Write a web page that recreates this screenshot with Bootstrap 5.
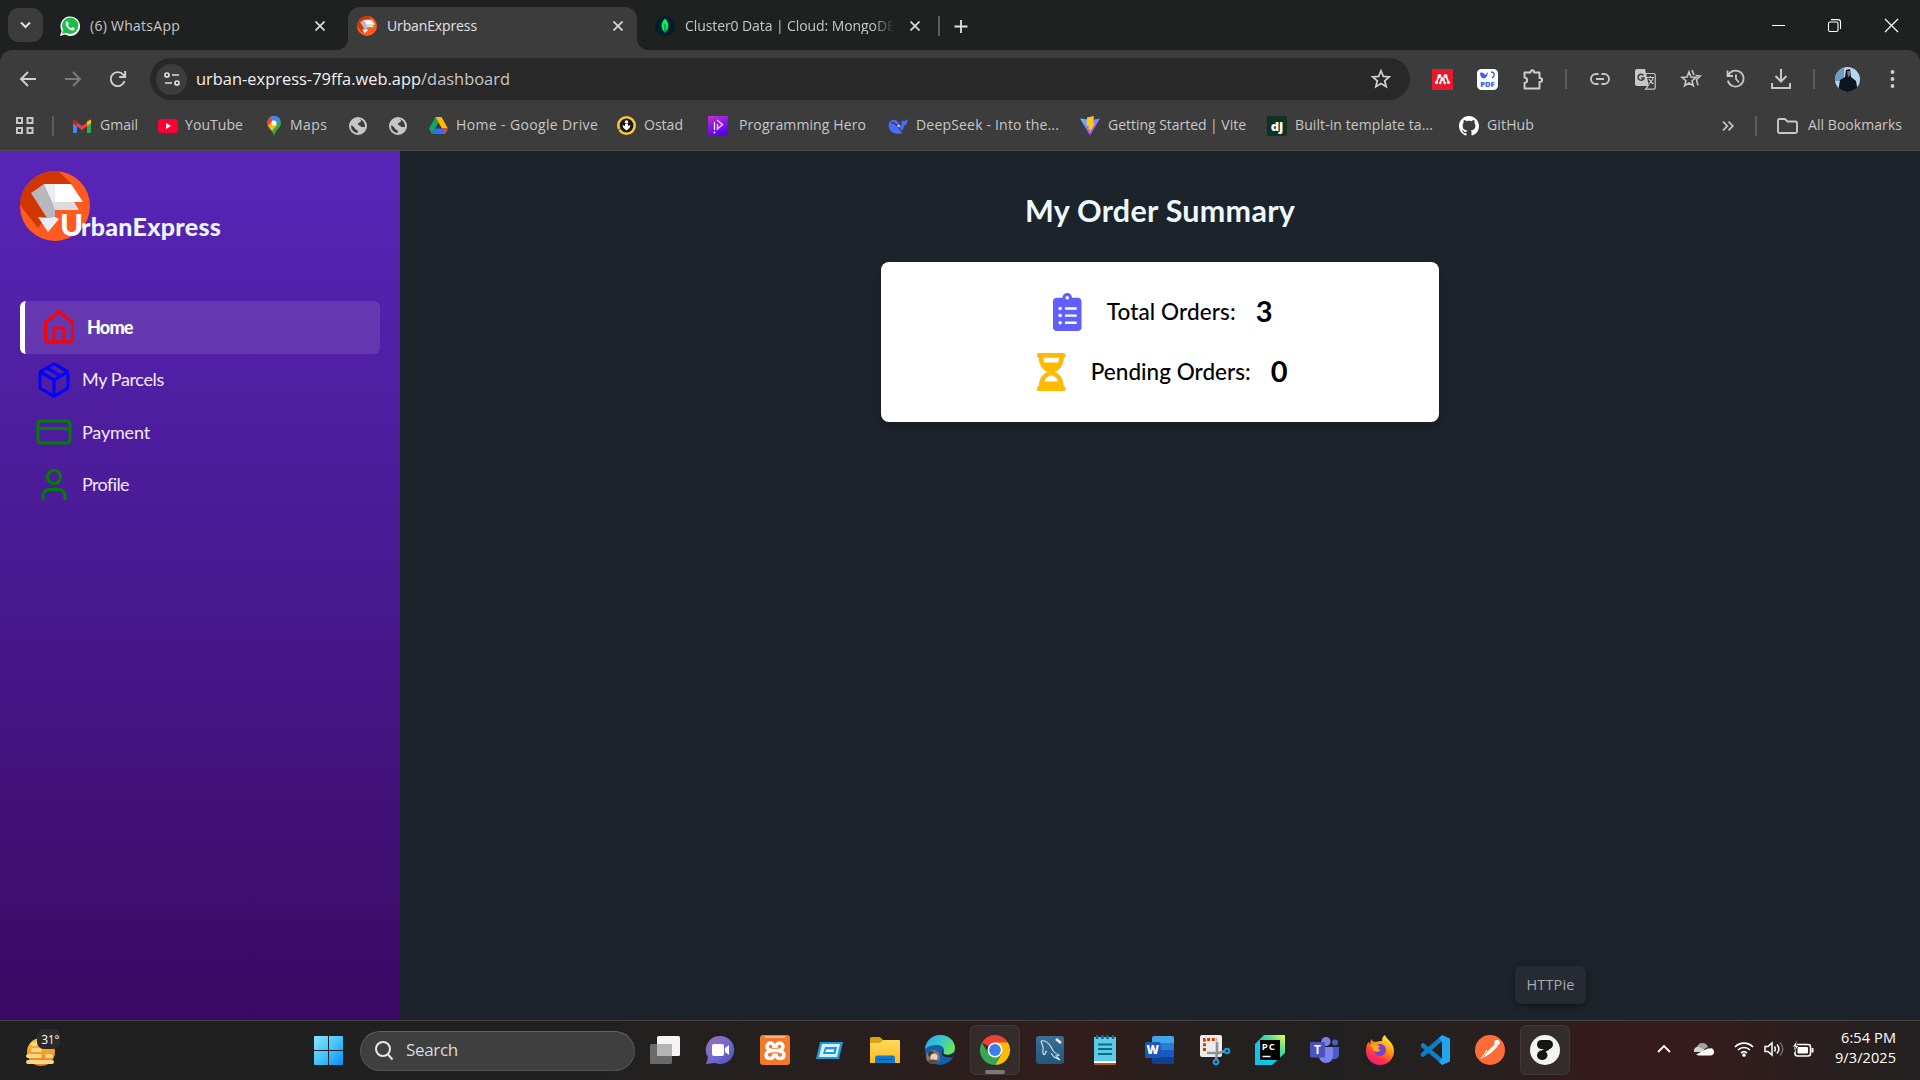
<!DOCTYPE html>
<html lang="en" data-bs-theme="dark">
<head>
<meta charset="utf-8">
<title>UrbanExpress</title>
<link href="https://cdn.jsdelivr.net/npm/bootstrap@5.3.0/dist/css/bootstrap.min.css" rel="stylesheet">
<script src="https://cdn.jsdelivr.net/npm/bootstrap@5.3.0/dist/js/bootstrap.bundle.min.js"></script>
<style>
html,body{height:1080px;overflow:hidden}
body{font-family:"Open Sans","Noto Sans",sans-serif;font-size:14px;line-height:1.2;background:#1d232a;color:#c7c7c7}
svg{display:block;flex:none;overflow:visible}
.fit{white-space:nowrap;flex:none;display:block}
.lbl-gap{margin-left:10px}
/* browser tabs */
.tabstrip{height:50px;background:#1f2120;padding-left:8px}
.tab-search{width:35px;height:34px;border-radius:11px;background:#3c3c3c}
.tab-item{height:43px;padding-bottom:5px}
.tab-one{width:305px;padding-right:23px;padding-left:17px}
.tab-two{width:289px;background:#3c3c3c;border-radius:12px 12px 0 0;padding-right:14px;padding-left:9px;color:#e3e3e3}
.tab-two::before,.tab-two::after{content:"";position:absolute;bottom:0;width:12px;height:12px}
.tab-two::before{left:-12px;background:radial-gradient(circle at 0 0,transparent 12px,#3c3c3c 12.5px)}
.tab-two::after{right:-12px;background:radial-gradient(circle at 100% 0,transparent 12px,#3c3c3c 12.5px)}
.tab-three{width:285px;padding-right:2px;padding-left:18px}
.fade-text{width:212px;-webkit-mask-image:linear-gradient(90deg,#000 188px,transparent 209px)}
.rule{width:2px;height:20px;background:#5b5c5e;flex:none}
.win-btns{gap:43px;padding-right:22px}
/* toolbar */
.toolbar-row{height:55px;background:#3c3c3c;border-radius:12px 12px 0 0;padding:8px 0 5px 16px}
.toolbar-wrap{background:#1f2120}
.nav-icons{width:134px;gap:21px}
.address{width:1260px;height:42px;border-radius:21px;background:#282828;padding:0 19px 0 6px}
.site-chip{width:31px;height:31px;border-radius:50%;background:#3c3c3c}
.url-text{font-size:16.4px;color:#c7c7c7;margin-left:9px}
.url-text b{font-weight:400;color:#f1f1f1}
.ext-icons{padding-left:10px}
.ext-icons>span{width:45px;display:flex;justify-content:center;flex:none}
.ext-icons>span.thin{width:22px}
.ext-icons>span.wide{width:46px}
/* bookmarks */
.bookmarks{height:46px;background:#3c3c3c;padding:0 18px 4px 15px;border-bottom:1px solid #4a4b4c}
.bm{height:20px}
.bm svg{margin-right:8px}
.w-apps{width:37px}.w-sep{width:20px}.w-gmail{width:86px}.w-yt{width:108px}.w-maps{width:83px}.w-globe{width:40px}
.w-drive{width:188px}.w-ostad{width:91px}.w-ph{width:180px}.w-deep{width:192px}.w-vite{width:187px}.w-dj{width:192px}
.w-yt svg{margin-right:7px}.w-ph svg{margin-right:11px}
.bm-end .rule{margin:0 16px 0 21px}
/* application */
.app-area{height:869px}
.sidebar{width:400px;padding:20px;background:linear-gradient(#5825b7,#4a1a94 45%,#3a0963)}
.app-area,.app-area *{font-family:Lato,"Open Sans",sans-serif}
.brand{height:70px;margin-bottom:60px;color:#eaf6ff;font-weight:900;font-size:25px;line-height:30px}
.brand-mark{width:70px;height:70px}
.brand-text{margin-left:-30px;margin-top:38px}
.brand-text .cap-u{font-size:31px;color:#fff;line-height:30px}
.menu-link{height:52.6px;padding-left:16px;color:#f2ebff;font-size:18px;border-radius:6px}
.menu-link.active{background:rgba(255,255,255,.11);border-left:5px solid #fff;color:#fff;font-weight:900}
.menu-link svg{margin-right:10px}
.main-pane{padding-top:39px}
.page-title{font-size:30.5px;font-weight:700;color:#ecf9ff;line-height:40px;margin:0 0 32px}
.summary{width:558px;height:160px;border-radius:8px;background:#fff;color:#000;box-shadow:0 6px 10px rgba(0,0,0,.15)}
.sum-row{height:60px;font-size:22.5px;font-weight:500;padding-left:5px}
.sum-row .fit{padding-bottom:2px}
.sum-row .num{font-size:29px;font-weight:700;margin-left:20px}
.sum-row svg{margin-right:25px}
.hover-tip{position:absolute;left:1515px;top:966px;width:71px;height:38px;border-radius:6px;background:#262a32;color:#a8abb0;font-size:14.5px;box-shadow:0 2px 7px rgba(0,0,0,.35)}
/* taskbar */
.taskbar{height:60px;border-top:1px solid #454443;background:linear-gradient(90deg,#202020 0,#212020 600px,#281f1e 900px,#331c1c 1080px,#26201e 1180px,#212020 1330px,#28201f 1500px,#351a1c 1590px,#371b1d 1690px,#2c1e1e 1790px,#222020 1920px)}
.weather{width:314px;padding-left:24px}
.search-pill{width:275px;height:40px;border-radius:20px;background:#3f3f3f;border:1px solid #535353;border-top-color:#636363;padding-left:14px;margin-left:17px;color:#dadada;font-size:17px}
.search-pill .fit{margin-left:13px}
.dock{gap:5px;padding-left:5px;padding-bottom:1px}
.dock-item{width:50px;height:50px;border-radius:6px}
.dock-item.on{background:#342c2b;border:1px solid #403937}
.dock-item.on.run::after{content:"";position:absolute;bottom:0;width:20px;height:4px;border-radius:2px;background:#7d7877}
.tray{padding-right:24px}
.clock{color:#fff;font-size:14.5px;line-height:20px;margin-left:21px;padding-bottom:2px}
</style>
</head>
<body>
<svg width="0" height="0" class="position-absolute">
<defs>
<linearGradient id="gWin" x1="0" y1="0" x2="1" y2="1"><stop offset="0" stop-color="#8be3ff"/><stop offset=".5" stop-color="#44c5fd"/><stop offset="1" stop-color="#0a8df5"/></linearGradient>
<linearGradient id="gPH" x1="0" y1="0" x2=".4" y2="1"><stop offset="0" stop-color="#c530d0"/><stop offset="1" stop-color="#5a00f0"/></linearGradient>
<linearGradient id="gVite" x1="0" y1="0" x2=".6" y2="1"><stop offset="0" stop-color="#41d1ff"/><stop offset="1" stop-color="#bd34fe"/></linearGradient>
<linearGradient id="gFold" x1="0" y1="0" x2="0" y2="1"><stop offset="0" stop-color="#ffd95e"/><stop offset="1" stop-color="#fbbc1d"/></linearGradient>
<linearGradient id="gChat" x1="0" y1="0" x2="1" y2="1"><stop offset="0" stop-color="#a46fa8"/><stop offset=".5" stop-color="#7468d0"/><stop offset="1" stop-color="#4a52b8"/></linearGradient>
<linearGradient id="gEdge" x1="0" y1="0" x2="1" y2=".5"><stop offset="0" stop-color="#2aa7e8"/><stop offset=".55" stop-color="#35c8cf"/><stop offset="1" stop-color="#6be35c"/></linearGradient>
<linearGradient id="gPC" x1="0" y1="1" x2="1" y2="0"><stop offset="0" stop-color="#07c3f2"/><stop offset=".5" stop-color="#12cbd8"/><stop offset=".72" stop-color="#5fe08a"/><stop offset="1" stop-color="#fcf84a"/></linearGradient>
<linearGradient id="gFF" x1=".8" y1="0" x2=".2" y2="1"><stop offset="0" stop-color="#fff44f"/><stop offset=".4" stop-color="#ff980e"/><stop offset=".7" stop-color="#ff3647"/><stop offset="1" stop-color="#e31587"/></linearGradient>
<linearGradient id="gSun" x1="0" y1="0" x2="0" y2="1"><stop offset="0" stop-color="#fcc330"/><stop offset="1" stop-color="#f07a1a"/></linearGradient>
<linearGradient id="gSql" x1="0" y1="0" x2="0" y2="1"><stop offset="0" stop-color="#3a7097"/><stop offset="1" stop-color="#20577a"/></linearGradient>
<clipPath id="cRound"><circle cx="35" cy="35" r="35"/></clipPath>
<clipPath id="cAv"><circle cx="12.5" cy="12.5" r="12.5"/></clipPath>
<symbol id="logo" viewBox="0 0 70 70"><g clip-path="url(#cRound)"><path fill="#ff5a1f" d="M0 0h70v70H0z"/><path fill="#d13500" d="M0 0h38l14 13-24 30-10 14L0 34z"/></g><path fill="#b8b8bc" d="M11 22 24 13 35 29v18H27z"/><path fill="#e8ecf5" d="M24 13h11v18h-3z"/><path fill="#fff" d="M35 13h16l12 18H35z"/><path fill="#dcdce0" d="M32 31h22l5 8H35z"/><path fill="#e8ecf5" d="m18 46 10 1 7-1 4 2-11 13z"/></symbol>
<symbol id="globe" viewBox="0 0 18 18"><circle cx="9" cy="9" r="8" fill="#3c3c3c" stroke="#c7c7c7" stroke-width="2"/><path fill="#c7c7c7" d="M1 8C1 3 6 .5 10 1c0 2 2 1 2 3s-3 1-3 3 3 1 3 3h4c0 3-3 6-7 7-1-2 1-3-1-4-3-1-2-4-7-5z"/></symbol>
<symbol id="cross" viewBox="0 0 10 10"><path d="m.5.5 9 9m0-9-9 9" stroke="#dcdcdc" stroke-width="1.7"/></symbol>
</defs>
</svg>

<header>
 <div class="tabstrip d-flex align-items-end">
  <div class="tab-search d-flex align-items-center justify-content-center mb-2"><svg width="11" height="8"><path d="m1 1.5 4.5 4.5L10 1.5" fill="none" stroke="#e0e0e0" stroke-width="2"/></svg></div>
  <div class="tab-item tab-one d-flex align-items-center">
   <svg width="20" height="20" viewBox="0 0 20 20"><path fill="#fff" d="M0 20 1.6 14.8A9.8 9.8 0 1 1 5.2 18.6z"/><circle cx="10.2" cy="9.8" r="8.2" fill="#1bbd4a"/><path fill="#1bbd4a" d="m2 18 1.3-4.6 3.3 3.4z"/><path fill="#fff" d="M7.2 5.2c-2.4.5-2 4.2 1.2 7.2 3.1 2.8 6.2 2.5 6.3.3 0-.8-1.9-1.7-2.3-1.6-.5.1-.9 1.3-1.4 1.1C9.6 11.700 8.400 10.500 8 9.300c-.1-.5.9-.9.8-1.400C8.700 7.200 7.900 5.200 7.200 5.200z"/></svg>
   <span class="fit lbl-gap me-auto" data-w="90">(6) WhatsApp</span><svg width="10" height="10"><use href="#cross"/></svg>
  </div>
  <div class="tab-item tab-two d-flex align-items-center position-relative">
   <svg width="20" height="20"><use href="#logo"/></svg><span class="fit lbl-gap me-auto" data-w="90">UrbanExpress</span><svg width="10" height="10"><use href="#cross"/></svg>
  </div>
  <div class="tab-item tab-three d-flex align-items-center">
   <svg width="20" height="20"><circle cx="10" cy="10" r="10" fill="#001e2b"/><path fill="#00ed64" d="M10 2.500c4.500 4.500 4.500 10-.2 14-4.300-4-4.300-9.500.2-14z"/><path d="M10 8v9.500" stroke="#00684a"/></svg>
   <span class="fade-text lbl-gap me-auto"><span class="fit" data-w="211">Cluster0 Data | Cloud: MongoDB</span></span><svg width="10" height="10"><use href="#cross"/></svg>
  </div>
  <div class="tab-item d-flex align-items-center ps-3"><span class="rule"></span><svg width="13" height="13" class="ms-3"><path d="M5 0v13M-1.500 6.500h13" stroke="#e3e3e3" stroke-width="1.800"/></svg></div>
  <div class="win-btns tab-item d-flex align-items-center ms-auto">
   <svg width="13" height="13"><path d="M-1 5.500h13" stroke="#fff"/></svg>
   <svg width="13" height="13" viewBox="1 1 13 13"><rect x=".5" y="3" width="9.500" height="9.500" rx="1.500" fill="none" stroke="#fff" stroke-width="1.100"/><path d="M3 .6h7a2.500 2.500 0 0 1 2.500 2.500v7" fill="none" stroke="#fff" stroke-width="1.100"/></svg>
   <svg width="13" height="13"><path d="m0-1 13 13M13-1 0 12" stroke="#fff" stroke-width="1.200"/></svg>
  </div>
 </div>
 <div class="toolbar-wrap"><div class="toolbar-row d-flex align-items-center">
  <div class="nav-icons d-flex align-items-center">
   <svg width="24" height="24" viewBox="0 0 24 24" fill="none" stroke="#d0d0d0" stroke-width="1.900"><path d="M20 12H5m7-7-7 7 7 7"/></svg>
   <svg width="24" height="24" viewBox="0 0 24 24" fill="none" stroke="#7b7b7b" stroke-width="1.900"><path d="M4 12h15m-7-7 7 7-7 7"/></svg>
   <svg width="24" height="24" viewBox="0 0 24 24" fill="none" stroke="#d0d0d0" stroke-width="1.900"><path d="M18.500 14a7 7 0 1 1-1.300-6.300l1.800 2M19.200 4v6h-6"/></svg>
  </div>
  <div class="address d-flex align-items-center">
   <span class="site-chip d-flex align-items-center justify-content-center"><svg width="16" height="14" fill="none" stroke="#dedede" stroke-width="1.700"><circle cx="3" cy="3" r="2"/><path d="M8 3h7M1 11h7"/><circle cx="13" cy="11" r="2"/></svg></span>
   <span class="fit url-text me-auto" data-w="314"><b>urban-express-79ffa.web.app</b>/dashboard</span>
   <svg width="20" height="20" viewBox="0 0 20 20"><path d="m10 1.800 2.300 5.600 6 .5-4.600 3.900 1.500 5.900-5.200-3.200-5.200 3.200 1.500-5.900L1.700 7.900l6-.5z" fill="none" stroke="#d0d0d0" stroke-width="1.700"/></svg>
  </div>
  <div class="ext-icons d-flex align-items-center flex-grow-1">
   <span><svg width="21" height="21"><path fill="#e8192c" d="M0 0h21v21H0z"/><g fill="#fff"><circle cx="7.500" cy="7" r="2"/><circle cx="13.500" cy="7" r="2"/><circle cx="10.500" cy="10" r="2"/><circle cx="4.500" cy="13.500" r="1.600"/><circle cx="16.500" cy="13.500" r="1.600"/><circle cx="8.200" cy="14" r="1.200"/><circle cx="12.800" cy="14" r="1.200"/></g><path d="M4.500 13.500 6.500 8M16.500 13.500 14.500 8M8.200 14l1.500-4M12.800 14l-1.500-4" fill="none" stroke="#fff" stroke-width="1.700"/></svg></span>
   <span><svg width="21" height="21"><rect width="21" height="21" rx="4.500" fill="#fff"/><path fill="#4060f5" d="M3 4c2-1 4 0 5 2l3-3-1 4c-2 4-7 3-7-3z"/><path d="M14 3c4 0 4 4 1 6" fill="none" stroke="#4060f5" stroke-width="1.400"/><text x="10.500" y="18" text-anchor="middle" font-size="7.500" font-weight="800" fill="#4060f5">PDF</text></svg></span>
   <span><svg width="21" height="21" fill="none" stroke="#d0d0d0" stroke-width="1.900"><path d="M2.500 3.500h6C8.500.5 12 .5 12 3.500h5.500V9c3.500 0 3.500 4 0 4v6.500h-15V14c3.500-.5 3.500-5 0-5.500z" stroke-linejoin="round"/></svg></span>
   <span class="thin"><i class="rule"></i></span>
   <span class="wide"><svg width="20" height="12" fill="none" stroke="#c7c7c7" stroke-width="1.900"><path d="M8.500 1H6a5 5 0 0 0 0 10h2.500M11.500 1H14a5 5 0 0 1 0 10h-2.500M6 6h8"/></svg></span>
   <span><svg width="21" height="21"><path fill="#c7c7c7" d="M2 0h8l4 17H2a2 2 0 0 1-2-2V2a2 2 0 0 1 2-2z"/><path d="M11 4.500h7.500a1.700 1.700 0 0 1 1.700 1.700v12.300a1.700 1.700 0 0 1-1.700 1.700h-8l2.500-3M12 8.500h7M15.500 7v2m2.500 0c-.5 3-2.500 4.500-4 6m0-5c1 2 3 4 4.500 5" fill="none" stroke="#c7c7c7" stroke-width="1.200"/><path d="M8.500 6.500A3 3 0 1 0 9 9H6.200" fill="none" stroke="#3c3c3c" stroke-width="1.500"/></svg></span>
   <span><svg width="21" height="20" fill="none" stroke="#c7c7c7" stroke-width="1.600"><path d="m9 3 2 5 5 .4-3.900 3.300 1.200 5L9 14l-4.300 2.700 1.200-5L2 8.400 7 8z"/><path d="m12 1 2 5M15.500 6.500l4.700.5-3.700 3.400 1.400 6"/></svg></span>
   <span><svg width="20" height="20" fill="none" stroke="#c7c7c7" stroke-width="1.800"><path d="M1.500 1.500V7H7M2 7a8 8 0 1 1-.2 4.500M10 5.500V10l3 3.500"/></svg></span>
   <span><svg width="20" height="20" fill="none" stroke="#c7c7c7" stroke-width="2"><path d="M10 0v12m-5.500-5 5.500 5.500L15.500 7M1 14v5h18v-5"/></svg></span>
   <span class="thin"><i class="rule"></i></span>
   <span><svg width="25" height="25"><g clip-path="url(#cAv)"><path fill="#b5d6ea" d="M0 0h25v25H0z"/><path fill="#6f9cc0" d="M0 0h9v14H0z"/><path fill="#0e1420" d="M3 25 5 13l5-3 1-7 4-1 1 8 5 4 2 11z"/><path fill="#8c6b5c" d="M12 4h3v5l-2 1z"/></g></svg></span>
   <span><svg width="5" height="20" fill="#d0d0d0"><circle cx="2.500" cy="3" r="1.900"/><circle cx="2.500" cy="10" r="1.900"/><circle cx="2.500" cy="17" r="1.900"/></svg></span>
  </div>
 </div></div>
 <nav class="bookmarks d-flex align-items-center">
  <div class="bm w-apps d-flex align-items-center"><svg width="19" height="19" fill="none" stroke="#c7c7c7" stroke-width="2"><path d="M2 2h5v5H2zM12.500 2h5v5h-5zM2 12h5v5H2zM12.500 12h5v5h-5z"/></svg></div>
  <div class="w-sep"><span class="rule d-block"></span></div>
  <div class="bm w-gmail d-flex align-items-center"><svg width="20" height="16"><path fill="#4285f4" d="M1 3v12h4V6z"/><path fill="#34a853" d="M15 6v9h4V3z"/><path fill="#ea4335" d="M1 1.500 10 8l9-6.500v4L10 12 1 5.500z"/><path fill="#c5221f" d="M1 1.500 5 3.500V8L1 5.500z"/><path fill="#fbbc04" d="m15 3.500 4-2v4L15 8z"/></svg><span class="fit" data-w="38">Gmail</span></div>
  <div class="bm w-yt d-flex align-items-center"><svg width="20" height="14"><rect width="20" height="14" rx="3.500" fill="#ff0033"/><path fill="#fff" d="m8 4 5 3-5 3z"/></svg><span class="fit" data-w="58">YouTube</span></div>
  <div class="bm w-maps d-flex align-items-center"><svg width="16" height="20" viewBox="0 0 14 20"><path fill="#34a853" d="M0 7a7 7 0 0 1 14 0c0 5-6 7-7 13C6 14 0 12 0 7z"/><path fill="#4285f4" d="M3 1a7 7 0 0 1 10.500 3L7 11z"/><path fill="#ea4335" d="M3 1 6 6 2 11A7 7 0 0 1 3 1z"/><path fill="#fbbc04" d="m1 10 5-6 4 5-5 6z"/><circle cx="7" cy="7" r="2.500" fill="#fff"/></svg><span class="fit" data-w="37">Maps</span></div>
  <div class="bm w-globe d-flex align-items-center"><svg width="18" height="18"><use href="#globe"/></svg></div>
  <div class="bm w-globe d-flex align-items-center"><svg width="18" height="18"><use href="#globe"/></svg></div>
  <div class="bm w-drive d-flex align-items-center"><svg width="19" height="17"><path fill="#0da960" d="M6.500 0 0 11.500 3 17 9.500 5.500z"/><path fill="#fbbc04" d="M6.500 0h6L19 11.500h-6z"/><path fill="#2d6ff7" d="M6 11.500h13L16 17H3z"/><path fill="#ea4335" d="m13 11.500 6 0-3 5.500z"/></svg><span class="fit" data-w="142">Home - Google Drive</span></div>
  <div class="bm w-ostad d-flex align-items-center"><svg width="19" height="19"><circle cx="9.500" cy="9.500" r="8.200" fill="#161616" stroke="#ffc92e" stroke-width="2.600"/><circle cx="9.500" cy="6" r="1.800" fill="#fff"/><path fill="#fff" d="m5.500 9 2.500 1V8h3v2l2.500-1-1 3-3 2.500-3-2.500z"/><path d="M1 14.500 5 11" stroke="#3c3c3c"/></svg><span class="fit" data-w="39">Ostad</span></div>
  <div class="bm w-ph d-flex align-items-center"><svg width="20" height="20"><path fill="url(#gPH)" d="M0 0h20v20H0z"/><path d="M6.500 6v8" stroke="#fff" stroke-width="1.300"/><circle cx="6.500" cy="16.500" r=".9" fill="#fff"/><path d="m9 4 5.500 4.500L9.500 13V8" fill="none" stroke="#f1b9ff" stroke-width="1.600"/></svg><span class="fit" data-w="127">Programming Hero</span></div>
  <div class="bm w-deep d-flex align-items-center"><svg width="20" height="16"><path fill="#4d6bfe" d="M1 5c2-4 7-4 9-1l3 4c1-1 0-3 1-6 1 2 4 1 5-1 1 4-1 6-3 7 0 3-2 5-3 6l2 1c-6 2-12 0-14-5-.5-2-.5-4 0-5z"/><path d="M3 5c3-1 5 1 7 4s3 4 5 5" fill="none" stroke="#3c3c3c" stroke-width="1.300"/><circle cx="10.500" cy="8" r="1" fill="#fff"/></svg><span class="fit" data-w="143">DeepSeek - Into the...</span></div>
  <div class="bm w-vite d-flex align-items-center"><svg width="20" height="20"><path fill="url(#gVite)" d="m0 2.500 10 17 10-17-8 1.400z"/><path fill="#ffc61c" d="m14 0-7 1.500-.5 8.500 2.500-.5-.8 4 2-.6-1 4.500 6-10.500-2.200.5z"/></svg><span class="fit" data-w="138">Getting Started | Vite</span></div>
  <div class="bm w-dj d-flex align-items-center"><svg width="20" height="20"><rect width="20" height="20" rx="1" fill="#0c3326"/><text x="10" y="14.500" text-anchor="middle" font-size="13" font-weight="800" fill="#fff">dj</text></svg><span class="fit" data-w="138">Built-in template ta...</span></div>
  <div class="bm d-flex align-items-center"><svg width="20" height="20" viewBox="0 0 16 16" fill="#fff"><path d="M8 0C3.580 0 0 3.580 0 8c0 3.540 2.290 6.530 5.470 7.590.4.07.55-.17.55-.38 0-.19-.01-.82-.01-1.490-2.010.37-2.530-.49-2.690-.94-.09-.23-.48-.94-.82-1.130-.28-.15-.68-.52-.01-.53.63-.01 1.080.58 1.230.82.72 1.210 1.870.87 2.330.66.07-.52.28-.87.51-1.070-1.780-.2-3.640-.89-3.640-3.950 0-.87.31-1.590.82-2.150-.08-.2-.36-1.020.08-2.120 0 0 .67-.21 2.200.82.64-.18 1.320-.27 2-.27s1.360.09 2 .27c1.530-1.040 2.200-.82 2.200-.82.44 1.100.16 1.920.08 2.120.51.56.82 1.270.82 2.150 0 3.070-1.870 3.750-3.650 3.950.29.25.54.73.54 1.480 0 1.070-.01 1.930-.01 2.200 0 .21.15.46.55.38A8.010 8.010 0 0 0 16 8c0-4.420-3.580-8-8-8"/></svg><span class="fit" data-w="47">GitHub</span></div>
  <div class="bm-end ms-auto d-flex align-items-center">
   <svg width="12" height="10" fill="none" stroke="#c7c7c7" stroke-width="1.700"><path d="m1 .7 4.300 4.300L1 9.300M6.500.7 10.800 5 6.500 9.300"/></svg>
   <span class="rule"></span><svg class="ms-1" width="21" height="16" fill="none" stroke="#c7c7c7" stroke-width="1.900"><path d="M1 2.500A1.500 1.500 0 0 1 2.500 1H8l2.500 2.500h8A1.500 1.500 0 0 1 20 5v8.500a1.500 1.500 0 0 1-1.500 1.500h-16A1.500 1.500 0 0 1 1 13.500z"/></svg>
   <span class="fit lbl-gap" data-w="94">All Bookmarks</span>
  </div>
 </nav>
</header>

<div class="app-area d-flex">
 <aside class="sidebar flex-shrink-0">
  <div class="brand d-flex">
   <svg class="brand-mark"><use href="#logo"/></svg>
   <div class="brand-text d-flex align-items-baseline position-relative"><span class="cap-u fit" data-w="21">U</span><span class="fit" data-w="140">rbanExpress</span></div>
  </div>
  <nav>
   <div class="menu-link active d-flex align-items-center"><svg width="36" height="36" viewBox="0 0 36 36" fill="none" stroke="#f00" stroke-width="3" stroke-linejoin="round" stroke-linecap="round"><path d="M18 2.500 4.500 13.500V30A3 3 0 0 0 7.500 33h21a3 3 0 0 0 3-3V13.500z"/><path d="M13 33V21.500a2.500 2.500 0 0 1 2.500-2.500h5a2.500 2.500 0 0 1 2.500 2.500V33"/></svg><span class="fit" data-w="46">Home</span></div>
   <div class="menu-link d-flex align-items-center"><svg width="36" height="36" viewBox="0 0 36 36" fill="none" stroke="#00f" stroke-width="3" stroke-linejoin="round" stroke-linecap="round"><path d="M16.500 2.500a3 3 0 0 1 3 0L30.500 9a3 3 0 0 1 1.500 2.600v12.800a3 3 0 0 1-1.500 2.600l-11 6.500a3 3 0 0 1-3 0L5.500 27A3 3 0 0 1 4 24.400V11.600A3 3 0 0 1 5.500 9z"/><path d="M4.500 10 18 18l13.500-8M18 18v15.500M11 6l13.500 8"/></svg><span class="fit" data-w="82">My Parcels</span></div>
   <div class="menu-link d-flex align-items-center"><svg width="36" height="36" viewBox="0 0 36 36" fill="none" stroke="#008000" stroke-width="3"><rect x="2" y="7" width="32" height="22" rx="3"/><path d="M2 14.500h32"/></svg><span class="fit" data-w="68">Payment</span></div>
   <div class="menu-link d-flex align-items-center"><svg width="36" height="36" viewBox="0 0 36 36" fill="none" stroke="#008000" stroke-width="3" stroke-linecap="round"><circle cx="18" cy="10" r="6.500"/><path d="M7 32v-3a6.500 6.500 0 0 1 6.500-6.500h9A6.500 6.500 0 0 1 29 29v3"/></svg><span class="fit" data-w="47">Profile</span></div>
  </nav>
 </aside>
 <main class="main-pane flex-grow-1 d-flex flex-column align-items-center">
  <h1 class="page-title"><span class="fit" data-w="270">My Order Summary</span></h1>
  <section class="summary d-flex flex-column justify-content-center">
   <div class="sum-row d-flex align-items-center justify-content-center"><svg width="28.500" height="38" viewBox="0 0 384 512" fill="#5f5fff"><path d="M336 64h-80c0-35.300-28.700-64-64-64s-64 28.700-64 64H48C21.500 64 0 85.500 0 112v352c0 26.500 21.500 48 48 48h288c26.500 0 48-21.500 48-48V112c0-26.500-21.500-48-48-48z"/><g fill="#fff"><circle cx="192" cy="64" r="24"/><circle cx="96" cy="208" r="24"/><circle cx="96" cy="304" r="24"/><circle cx="96" cy="400" r="24"/><rect x="160" y="192" width="160" height="32" rx="8"/><rect x="160" y="288" width="160" height="32" rx="8"/><rect x="160" y="384" width="160" height="32" rx="8"/></g></svg><span class="fit" data-w="129">Total Orders:</span><span class="fit num" data-w="16">3</span></div>
   <div class="sum-row d-flex align-items-center justify-content-center"><svg width="28.500" height="38" viewBox="0 0 384 512" fill="#ffb900"><path fill-rule="evenodd" d="M360 0H24C10.700 0 0 10.700 0 24v16c0 13.300 10.700 24 24 24 0 91 51 167.700 120.800 192C75 280.300 24 357 24 448c-13.300 0-24 10.700-24 24v16c0 13.300 10.700 24 24 24h336c13.300 0 24-10.700 24-24v-16c0-13.300-10.700-24-24-24 0-91-51-167.700-120.800-192C309 231.700 360 155 360 64c13.300 0 24-10.700 24-24V24c0-13.300-10.700-24-24-24zm-75 384H99c17-46.800 52-80 93-80s76 33.200 93 80zm0-256H99c-7-19.500-11-41.300-11-64h208c0 22.800-4 44.600-11 64z"/></svg><span class="fit" data-w="160">Pending Orders:</span><span class="fit num" data-w="17">0</span></div>
  </section>
 </main>
</div>
<div class="hover-tip d-flex align-items-center justify-content-center"><span class="fit" data-w="48">HTTPie</span></div>

<footer class="taskbar d-flex align-items-center">
 <div class="weather"><svg width="38" height="38"><circle cx="17" cy="20" r="14" fill="url(#gSun)"/><path d="M9 12h4M9 18h7M4 24h12M23 24h4M4 30h24" stroke="#f3d98c" stroke-width="4" stroke-linecap="round"/><rect x="13" y="-3" width="23" height="20" rx="7" fill="#2b2b2b"/><text x="17.500" y="11.500" font-size="13.500" textLength="18" lengthAdjust="spacingAndGlyphs" fill="#fff">31°</text></svg></div>
 <svg width="29" height="29"><path fill="url(#gWin)" d="M1 0h13v14H0V1a1 1 0 0 1 1-1zM15 0h13a1 1 0 0 1 1 1v13H15zM0 15h14v14H1a1 1 0 0 1-1-1zM15 15h14v13a1 1 0 0 1-1 1H15z"/></svg>
 <div class="search-pill d-flex align-items-center"><svg width="18" height="19" fill="none" stroke="#e6e6e6" stroke-width="2"><circle cx="8" cy="8" r="7"/><path d="m12.500 13 5 5.500"/></svg><span class="fit" data-w="52">Search</span></div>
 <div class="dock d-flex align-items-center">
  <div class="dock-item d-flex align-items-center justify-content-center"><svg width="30" height="30"><rect x="7" y="1" width="23" height="20" rx="1.500" fill="#f4f4f4"/><rect x="0" y="9" width="22" height="20" rx="1.500" fill="#6a6a6a"/><path fill="#b4b4b4" d="M7 9h15v12H7z"/></svg></div>
  <div class="dock-item d-flex align-items-center justify-content-center"><svg width="30" height="30"><path fill="url(#gChat)" d="M15 1a14 14 0 1 1-5 27L1 29l2-6.500A14 14 0 0 1 15 1z"/><rect x="7" y="9" width="12" height="12" rx="2" fill="#fff"/><path fill="#fff" d="m20 13 4-3v10l-4-3z"/></svg></div>
  <div class="dock-item d-flex align-items-center justify-content-center"><svg width="30" height="30"><rect width="30" height="30" rx="3" fill="#f4782a"/><path fill="#fbb383" d="M4 1h22l-1 2H5z"/><path d="M12 15.500h6M12 15.500c-3-.5-5-1.500-5-4S9 8 10.500 8s3.500 1 3.500 5M18 15.500c3-.5 5-1.500 5-4S21 8 19.500 8 16 9 16 13M12 15.500c-3 .5-6 2-6 4.500S8 23.500 10 23.500s4-1 4-5M18 15.500c3 .5 6 2 6 4.500s-2 3.500-4 3.500-4-1-4-5" fill="none" stroke="#fff" stroke-width="3.400" stroke-linejoin="round"/></svg></div>
  <div class="dock-item d-flex align-items-center justify-content-center"><svg width="30" height="30"><path fill="#1d98d9" d="m5 7 23 0-4 17H1z"/><path fill="#d3f1fc" d="m7 9 18 0-3 13H4z"/><path fill="#1d98d9" d="m10 12h12l-1.500 7H8z"/><path fill="#fff" d="M11 14.500h8l-.5 2.500h-8z"/></svg></div>
  <div class="dock-item d-flex align-items-center justify-content-center"><svg width="30" height="30"><path fill="#dca10c" d="M0 3.500A1.500 1.500 0 0 1 1.500 2H10l4 4v6H0z"/><path fill="url(#gFold)" d="M0 8h10l3-3h16a1 1 0 0 1 1 1v22H0z"/><path fill="#1177cf" d="M5 28v-5a2.500 2.500 0 0 1 2.500-2.500h15A2.500 2.500 0 0 1 25 23v5z"/><path d="M8 24.500h14" stroke="#0b5292"/></svg></div>
  <div class="dock-item d-flex align-items-center justify-content-center"><svg width="30" height="30"><circle cx="15" cy="15" r="15" fill="#1060ad"/><path fill="url(#gEdge)" d="M0 14C1 5 8 0 15 0c9 0 15 6 15 13 0 6-7 8-11 6-2-1 0-2 0-4 0-3-3-5-7-5-6 0-10 2-12 4z"/><path fill="#232020" d="M19 15c-1 2-1 3 0 4 3 2 8 1 11-2l-2 5c-4 1-10 0-11-3-.5-2 1-4 2-4z"/><circle cx="8" cy="22" r="7" fill="#8a7466"/><circle cx="6" cy="19" r="3" fill="#443a36"/><circle cx="9" cy="22" r="3.600" fill="#e2d3c6"/><path fill="#5a4a42" d="M3 26c3-2 7-2 10 0-2 4-8 4-10 0z"/></svg></div>
  <div class="dock-item on run d-flex align-items-center justify-content-center position-relative"><svg width="30" height="30" viewBox="0 0 30 30"><path fill="#ea4335" d="M15 15 2 7.500a15 15 0 0 1 26 0z"/><path fill="#fbbc04" d="M15 7.500h13A15 15 0 0 1 15 30l6.500-11z"/><path fill="#34a853" d="M2 7.500A15 15 0 0 0 15 30l6.500-11.300L8.500 18.700z"/><circle cx="15" cy="15" r="7.500" fill="#fff"/><circle cx="15" cy="15" r="5.900" fill="#3b7ded"/></svg></div>
  <div class="dock-item d-flex align-items-center justify-content-center"><svg width="28" height="28"><rect width="28" height="28" rx="3" fill="url(#gSql)"/><path d="M5 5c4-1 8 2 10 6s3 6 8 8l-3 1 4 4-6-3-3-4M5 5c1 4 3 6 2 9s1 6 2 4 0-4 2-2" fill="none" stroke="#d5e5ef" stroke-width="1.100"/><path d="m20 3 5 4" stroke="#e8eef2" stroke-width="2.400"/></svg></div>
  <div class="dock-item d-flex align-items-center justify-content-center"><svg width="22" height="30"><rect y="3" width="22" height="27" rx="1.500" fill="#a85d1b"/><path fill="#fff" d="M0 5h22v23H0z"/><path fill="#5ccbe4" d="M0 2h22v24H0z"/><path d="M4 9.500h14M4 14h14M4 19h14" stroke="#0a6b8e" stroke-width="2"/><path d="M3 0v4M8.500 0v4M13.500 0v4M19 0v4" stroke="#0a6b8e" stroke-width="2.500"/></svg></div>
  <div class="dock-item d-flex align-items-center justify-content-center"><svg width="30" height="30"><path fill="#41a5ee" d="M7 3a2 2 0 0 1 2-2h18.500A1.500 1.500 0 0 1 29 2.500V8H7z"/><path fill="#2b7cd3" d="M7 8h22v7H7z"/><path fill="#185abd" d="M7 15h22v7H7z"/><path fill="#103f91" d="M7 22h22v5.500a1.500 1.500 0 0 1-1.500 1.500H9a2 2 0 0 1-2-2z"/><rect y="7" width="15.500" height="16" rx="1.500" fill="#1a57b8"/><text x="7.700" y="19" text-anchor="middle" font-size="12" font-weight="800" fill="#fff">W</text></svg></div>
  <div class="dock-item d-flex align-items-center justify-content-center"><svg width="30" height="30"><rect width="22" height="22" rx="2" fill="#ececec"/><path d="M4.500 16V4.500H17" fill="none" stroke="#d83b01" stroke-width="3" stroke-dasharray="3 1.700"/><path d="M7 18h12l6-2M17 7v11l-1 7" fill="none" stroke="#8d9297" stroke-width="2.600"/><g fill="none" stroke="#1a9be6" stroke-width="2"><circle cx="27" cy="16" r="2.300"/><circle cx="16" cy="27" r="2.300"/></g></svg></div>
  <div class="dock-item d-flex align-items-center justify-content-center"><svg width="30" height="30"><path fill="url(#gPC)" d="M9 0h21v18L17 30H0V9z"/><path d="M5 5h20v20H5z"/><text x="6.800" y="15" font-size="9.500" font-weight="700" fill="#fff" textLength="13">PC</text><path d="M7.500 21.500h8" stroke="#fff" stroke-width="1.500"/></svg></div>
  <div class="dock-item d-flex align-items-center justify-content-center"><svg width="30" height="30"><circle cx="25" cy="7.500" r="3" fill="#5059c9"/><circle cx="16" cy="6.500" r="4.500" fill="#7b83eb"/><path fill="#5059c9" d="M20 12h9v8a5 5 0 0 1-9 2z"/><path fill="#7b83eb" d="M9 12h14v9a7 7 0 0 1-14 0z"/><rect y="7" width="15" height="15.500" rx="1.500" fill="#4b53bc"/><text x="7.500" y="19" text-anchor="middle" font-size="12" font-weight="700" fill="#fff">T</text></svg></div>
  <div class="dock-item d-flex align-items-center justify-content-center"><svg width="30" height="30"><path fill="url(#gFF)" d="M6 4c1 2 2 3 5 3 2-1 4-1 6-1 0-3 1-5 3-6 1 4 9 7 9 16A14 14 0 1 1 1 16c0-4 1-8 3-9l1 3z"/><circle cx="15" cy="15" r="6" fill="#7a3fd6"/><path fill="#ffa61d" d="M5 10c4-2 8-1 10 2-3 0-2 3 1 3-3 3-8 2-8-1z"/></svg></div>
  <div class="dock-item d-flex align-items-center justify-content-center"><svg width="30" height="30"><path d="m3 10.500 18 15M3 19.500 21 4" stroke="#0e7fc6" stroke-width="4.500" stroke-linecap="round"/><path fill="#24a4ee" d="m22 0 8 3.500v23L22 30l-3-3 3-4V7l-3-4z"/></svg></div>
  <div class="dock-item d-flex align-items-center justify-content-center"><svg width="30" height="30"><circle cx="15" cy="15" r="15" fill="#ff6c37"/><circle cx="22" cy="7.500" r="2.700" fill="#fff"/><path fill="#fff" d="m20 9 3 2-7 7-8 5 4-6z"/><path d="M12 15 6 24" stroke="#fff"/></svg></div>
  <div class="dock-item on d-flex align-items-center justify-content-center"><svg width="30" height="30"><circle cx="15" cy="15" r="15" fill="#f5f5f0"/><rect x="7" y="5" width="16" height="9" rx="4.500" fill="#151515"/><path d="M13 17c0-2 5-2 6-5" fill="none" stroke="#151515" stroke-width="3.500"/><rect x="7" y="15.500" width="10.500" height="9.500" rx="4.700" fill="#151515"/></svg></div>
 </div>
 <div class="tray d-flex align-items-center ms-auto pb-1">
  <svg width="14" height="9" viewBox="1 0 14 9" class="me-4"><path d="m1 8 6-6 6 6" fill="none" stroke="#fff" stroke-width="1.800"/></svg>
  <svg width="20" height="14" viewBox="2 0 20 14"><path fill="#a5a1a1" d="M3 6a5 5 0 0 1 5-5 6 6 0 0 1 6 4l-7 4z"/><path fill="#d4d2d2" d="M0 10a4 4 0 0 1 5-5l8 4 4-3a4 4 0 0 1 3 4z"/><path fill="#fff" d="M2 12.500 12 7.500c2-2 8-1 8 2.500 0 2-1.500 3.500-3.500 3.500h-12z"/></svg>
  <svg width="20" height="16" class="ms-3 me-2" viewBox="-2 0 20 16" fill="none" stroke="#fff" stroke-width="1.700"><path d="M1 6a12.500 12.500 0 0 1 18 0M4 9a8.500 8.500 0 0 1 12 0M7 12a4.500 4.500 0 0 1 6 0"/><circle cx="10" cy="14" r="1" fill="#fff"/></svg>
  <svg width="21" height="16" class="ms-1 me-2" fill="none" stroke="#fff" stroke-width="1.500"><path d="M1 5.500h3L8 2v12l-4-3.500H1zM10.500 5.500c1 1.500 1 3.500 0 5M13 3.500c2.500 3 2.500 6 0 9"/><path d="M16 1.500c3.500 4 3.500 9 0 13" stroke="#776a6a"/></svg>
  <svg width="21" height="16"><rect x="2" y="3.500" width="15.500" height="11.500" rx="2.500" fill="none" stroke="#fff" stroke-width="1.600"/><rect x="4.500" y="6" width="10.500" height="6.500" rx="1" fill="#fff"/><path d="M19.500 7v4.500" stroke="#fff" stroke-width="2"/><path fill="#fff" stroke="#2c1e1e" stroke-width=".8" d="M4-1-.5 6h3L1 11l5-6.500H3.500z"/></svg>
  <div class="clock d-flex flex-column align-items-end"><span class="fit" data-w="55">6:54 PM</span><span class="fit" data-w="61">9/3/2025</span></div>
 </div>
</footer>
<script>
/* Track each label so it spans the width given in data-w. */
document.querySelectorAll('[data-w]').forEach(function (el) {
  el.style.display = 'inline-block';
  var w = el.getBoundingClientRect().width, n = el.textContent.length;
  el.style.display = '';
  if (n > 1) el.style.letterSpacing = ((el.dataset.w - w) / (n - 0.5)).toFixed(3) + 'px';
  el.style.width = el.dataset.w + 'px';
});
</script>
</body>
</html>
